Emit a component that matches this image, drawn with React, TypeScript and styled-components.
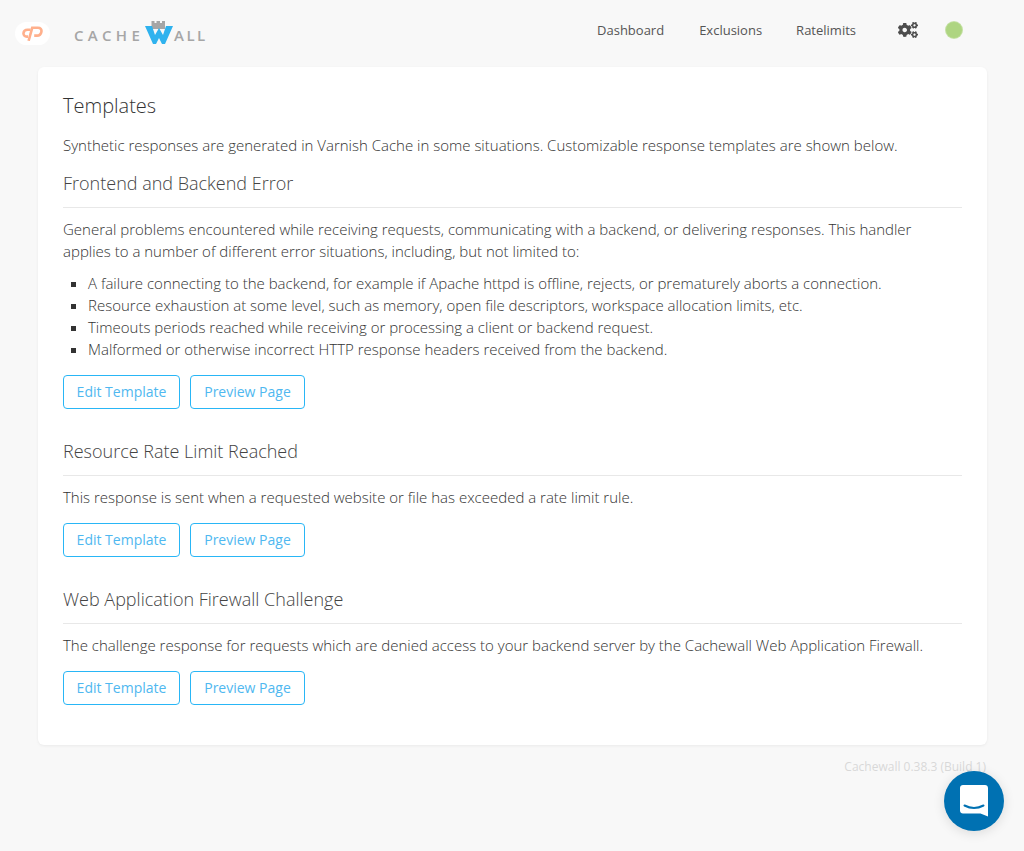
import React from 'react'
import styled, { createGlobalStyle } from 'styled-components'
import { FaCogs } from 'react-icons/fa'

const GlobalStyle = createGlobalStyle`
  html, body {
    margin: 0;
    padding: 0;
    background: #f8f8f8;
  }
  body {
    font-family: "Open Sans", "Liberation Sans", sans-serif;
    font-size: 15px;
    line-height: 22px;
    font-weight: 300;
    color: #333;
  }
`

const Page = styled.div`
  min-height: 851px;
  box-sizing: border-box;
  position: relative;
  overflow: hidden;
`

const Header = styled.header`
  display: flex;
  align-items: center;
  height: 67px;
  box-sizing: border-box;
  padding: 0 0 6px 15px;
`

const CpanelBadge = styled.div`
  width: 35px;
  height: 23px;
  margin-top: 5px;
  border-radius: 12px;
  background: #fff;
  display: flex;
  align-items: center;
  justify-content: center;
`

const Logo = styled.div`
  display: flex;
  align-items: flex-end;
  margin-left: 24px;
  height: 26px;
  color: #a6a6a6;
  font-size: 15px;
  line-height: 20px;
  font-weight: 600;
`

const LogoText = styled.span<{ $tight?: boolean }>`
  letter-spacing: ${(p) => (p.$tight ? '2.4px' : '4.3px')};
  margin-left: ${(p) => (p.$tight ? '1px' : '0')};
  margin-right: ${(p) => (p.$tight ? '0' : '1px')};
  margin-bottom: -1px;
`

const Nav = styled.nav`
  display: flex;
  align-items: center;
  margin-left: auto;
  margin-right: 62px;
  margin-bottom: 2px;
`

const NavLink = styled.a<{ $gap: number }>`
  font-size: 13px;
  font-weight: 400;
  color: #555;
  margin-right: ${(p) => p.$gap}px;
  cursor: pointer;
`

const GearWrap = styled.span`
  display: flex;
  margin-left: 6px;
  margin-right: 28px;
  color: #4d4d4d;
`

const StatusDot = styled.span`
  width: 16px;
  height: 16px;
  border-radius: 50%;
  background: #aed581;
  box-shadow: 0 0 0 1px #c5e1a5;
`

const Card = styled.main`
  margin: 0 37px 0 38px;
  height: 678px;
  box-sizing: border-box;
  padding: 28px 25px 0;
  background: #fff;
  border-radius: 6px;
  box-shadow: 0 1px 3px rgba(0, 0, 0, 0.06);
`

const Title = styled.h1`
  margin: 0 0 17px;
  font-size: 20px;
  line-height: 22px;
  font-weight: 300;
  color: #333;
`

const Text = styled.p`
  margin: 0;
`

const SectionTitle = styled.h2`
  margin: 17px 0 0;
  padding-bottom: 14px;
  font-size: 18px;
  line-height: 20px;
  font-weight: 300;
  color: #444;
  border-bottom: 1px solid #e8e8e8;
`

const Section = styled.section`
  margin-top: 32px;

  ${Text} {
    margin-top: 10px;
  }

  &:first-of-type {
    margin-top: 0;
  }
`

const BulletList = styled.ul`
  margin: 10px 0 0;
  padding-left: 25px;
  list-style: square;
`

const ButtonRow = styled.div`
  display: flex;
  gap: 10px;
  margin-top: 15px;
`

const OutlineButton = styled.button<{ $width: number }>`
  width: ${(p) => p.$width}px;
  height: 34px;
  box-sizing: border-box;
  padding: 0 0 2px;
  background: #fff;
  border: 1px solid #29b6f6;
  border-radius: 4px;
  color: #4fb8f0;
  font-family: inherit;
  font-size: 14px;
  cursor: pointer;
`

const Footer = styled.footer`
  margin: 11px 38px 0 0;
  text-align: right;
  font-size: 12px;
  font-weight: 400;
  color: #d8d8d8;
`

const ChatButton = styled.button`
  position: absolute;
  left: 944px;
  top: 771px;
  width: 60px;
  height: 60px;
  padding: 0;
  border: 0;
  border-radius: 50%;
  background: #0071b2;
  box-shadow: 0 2px 12px rgba(0, 0, 0, 0.12);
  display: flex;
  align-items: center;
  justify-content: center;
  cursor: pointer;
`

const CpanelIcon = () => (
  <svg width="21" height="15" viewBox="0 0 21 15" fill="none" stroke="#ffb08c" strokeWidth="2.6">
    <path d="M8.500 3.800H5.500C3.300 3.800 1.700 5.200 1.500 7.200 1.300 9.200 2.800 10.600 4.800 10.600h1.200" />
    <path d="M6.600 14.800 10.200 1.800H16c2.400 0 3.800 1.500 3.400 3.900-.4 2.400-2.200 3.900-4.400 3.900h-2.800" />
  </svg>
)

const WallMark = () => (
  <svg width="28" height="23" viewBox="0 0 28 23">
    <path d="M6.500 0h3v2h2V0h3.500v2h2V0h3v8h-13.500z" fill="#a6a6a6" />
    <path
      d="M0 5h7l3 9 4-7 4 7 3-9h7l-8 18h-3l-3-6-3 6H8z"
      fill="#2fb2ee"
    />
  </svg>
)

const ChatIcon = () => (
  <svg width="28" height="32" viewBox="0 0 28 32">
    <path
      d="M3 0h22c1.700 0 3 1.300 3 3v28.500l-7.500-3H3c-1.700 0-3-1.300-3-3V3c0-1.700 1.300-3 3-3z"
      fill="#fff"
    />
    <path
      d="M4.500 20.500c6 3.200 13 3.200 19 0"
      fill="none"
      stroke="#0071b2"
      strokeWidth="2"
      strokeLinecap="round"
    />
  </svg>
)

const Buttons = () => (
  <ButtonRow>
    <OutlineButton $width={117}>Edit Template</OutlineButton>
    <OutlineButton $width={115}>Preview Page</OutlineButton>
  </ButtonRow>
)

export default function App() {
  return (
    <Page>
      <GlobalStyle />
      <Header>
        <CpanelBadge>
          <CpanelIcon />
        </CpanelBadge>
        <Logo>
          <LogoText>CACHE</LogoText>
          <WallMark />
          <LogoText $tight>ALL</LogoText>
        </Logo>
        <Nav>
          <NavLink $gap={35}>Dashboard</NavLink>
          <NavLink $gap={34}>Exclusions</NavLink>
          <NavLink $gap={36}>Ratelimits</NavLink>
          <GearWrap>
            <FaCogs size={20} />
          </GearWrap>
          <StatusDot />
        </Nav>
      </Header>
      <Card>
        <Title>Templates</Title>
        <Text>
          Synthetic responses are generated in Varnish Cache in some situations. Customizable
          response templates are shown below.
        </Text>
        <Section>
          <SectionTitle>Frontend and Backend Error</SectionTitle>
          <Text>
            General problems encountered while receiving requests, communicating with a backend, or
            delivering responses. This handler applies to a number of different error situations,
            including, but not limited to:
          </Text>
          <BulletList>
            <li>
              A failure connecting to the backend, for example if Apache httpd is offline, rejects,
              or prematurely aborts a connection.
            </li>
            <li>
              Resource exhaustion at some level, such as memory, open file descriptors, workspace
              allocation limits, etc.
            </li>
            <li>Timeouts periods reached while receiving or processing a client or backend request.</li>
            <li>Malformed or otherwise incorrect HTTP response headers received from the backend.</li>
          </BulletList>
          <Buttons />
        </Section>
        <Section>
          <SectionTitle>Resource Rate Limit Reached</SectionTitle>
          <Text>This response is sent when a requested website or file has exceeded a rate limit rule.</Text>
          <Buttons />
        </Section>
        <Section>
          <SectionTitle>Web Application Firewall Challenge</SectionTitle>
          <Text>
            The challenge response for requests which are denied access to your backend server by the
            Cachewall Web Application Firewall.
          </Text>
          <Buttons />
        </Section>
      </Card>
      <Footer>Cachewall 0.38.3 (Build 1)</Footer>
      <ChatButton aria-label="Chat">
        <ChatIcon />
      </ChatButton>
    </Page>
  )
}
